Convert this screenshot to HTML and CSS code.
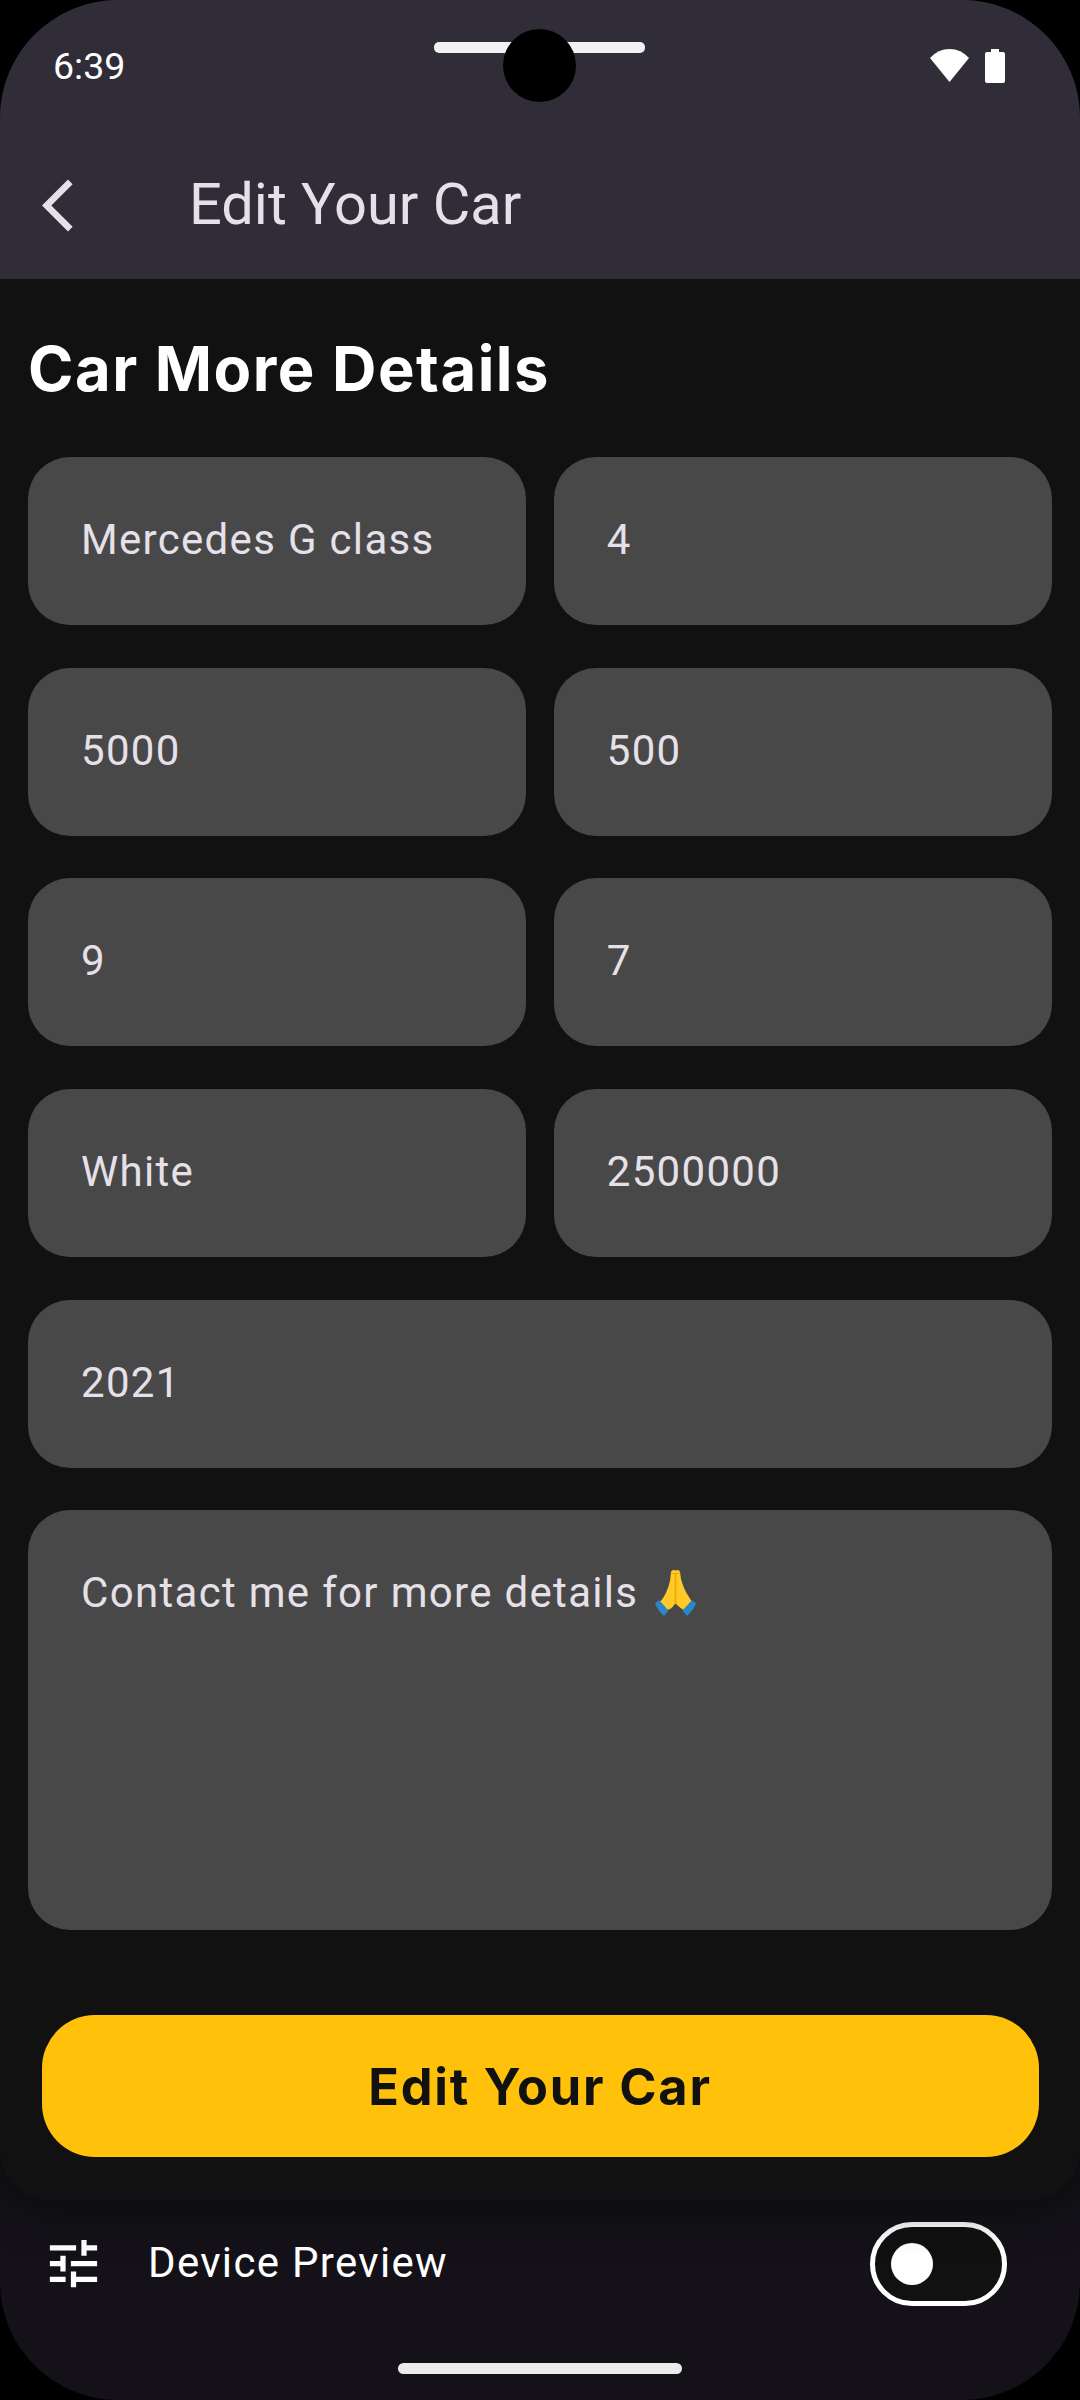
FILE: index.html
```html
<!DOCTYPE html>
<html lang="en">
<head>
<meta charset="utf-8">
<title>Edit Your Car</title>
<link rel="stylesheet" href="styles.css">
</head>
<body>
<div class="screen">
  <main class="app">
    <header class="header">
      <div class="status">
        <span class="clock">6:39</span>
        <div class="status-icons">
          <svg class="wifi" width="39" height="33" viewBox="0 0 39 33"><path d="M0 9Q8 0 19.500 0T39 9L19.500 33z" fill="#fff"/></svg>
          <svg class="battery" width="20" height="34" viewBox="0 0 20 34"><path d="M6 0h8v3h4q2 0 2 2v27q0 2-2 2H2q-2 0-2-2V5q0-2 2-2h4z" fill="#fff"/></svg>
        </div>
        <span class="speaker"></span>
        <span class="camera"></span>
      </div>
      <div class="toolbar">
        <svg width="63" height="63" viewBox="0 0 24 24"><path d="M11.67 3.87L9.9 2.1 0 12l9.9 9.9 1.77-1.77L3.54 12z" fill="#e6e0e9"/></svg>
        <h1 class="title">Edit Your Car</h1>
      </div>
    </header>
    <section class="content">
      <h2 class="heading">Car More Details</h2>
      <form class="form">
        <div class="field"><span>Mercedes G class</span></div>
        <div class="field"><span>4</span></div>
        <div class="field"><span>5000</span></div>
        <div class="field"><span>500</span></div>
        <div class="field"><span>9</span></div>
        <div class="field"><span>7</span></div>
        <div class="field"><span>White</span></div>
        <div class="field"><span>2500000</span></div>
        <div class="field wide"><span>2021</span></div>
        <div class="field wide tall"><span>Contact me for more details</span>
          <svg class="pray" width="42" height="48" viewBox="0 0 42 48">
            <path d="M16 3Q17 0 20.500 1.500Q24 0 25 3L26 10Q29 21 34 28L37 33L29 41Q25 39 22 36L20.700 34.500L19 36Q17 40 12 41L5 33Q12 25 15 12z" fill="#ffca28"/>
            <path d="M20.500 4V25Q20.500 31 20.700 35" fill="none" stroke="#f2a600" stroke-width="1.600"/>
            <path d="M16.500 4.500h8" stroke="#f2a600" stroke-width="1"/>
            <path d="M4 31L13.500 41.500L9 47Q3 42 0 34.500zM37 31L27.500 41.500L32 47Q38 42 41 34.500z" fill="#2a86c8"/>
          </svg>
        </div>
      </form>
      <button class="submit" type="button">Edit Your Car</button>
    </section>
  </main>
  <footer class="preview">
    <svg width="63" height="63" viewBox="0 0 24 24"><path d="M3 17v2h6v-2H3zM3 5v2h10V5H3zm10 16v-2h8v-2h-8v-2h-2v6h2zM7 9v2H3v2h4v2h2V9H7zm14 4v-2H11v2h10zm-6-4h2V7h4V5h-4V3h-2v6z" fill="#fff"/></svg>
    <span class="preview-label">Device Preview</span>
    <span class="switch"><span class="knob"></span></span>
  </footer>
  <div class="nav"><span class="handle"></span></div>
</div>
</body>
</html>
```
FILE: styles.css
```css
* { box-sizing: border-box; }
body { margin: 0; background: #000; font-family: Roboto, sans-serif; }
.screen {
  display: flex; flex-direction: column;
  width: 1080px; height: 2400px;
  border-radius: 118px; overflow: hidden;
  background: #141218;
}
.app {
  position: relative; z-index: 1;
  height: 2200.5px; flex: none;
  background: #111;
  border-radius: 0 0 52px 52px;
  box-shadow: 0 0 52px rgba(0, 0, 0, .6);
}
.header { height: 279px; background: #302d38; }
.status {
  position: relative; display: flex; justify-content: space-between;
  height: 132px; padding: 0 75px 0 53px; align-items: center;
}
.clock { font-size: 37.5px; color: #fff; }
.status-icons { display: flex; gap: 16px; align-items: flex-start; }
.speaker {
  position: absolute; left: 434px; top: 42px;
  width: 211px; height: 11px; border-radius: 5px; background: #eff1f2;
}
.camera {
  position: absolute; left: 503px; top: 29px;
  width: 73px; height: 73px; border-radius: 50%; background: #000;
}
.toolbar { display: flex; align-items: center; height: 147px; padding-left: 42px; gap: 84px; }
.title { margin: 0; padding-bottom: 3px; font-size: 57.75px; font-weight: 400; color: #e6e0e9; }
.content { padding: 0 28px; }
.heading {
  margin: 0; padding-top: 49px; height: 178px;
  font: 650 61.5px/82px Inter, sans-serif; letter-spacing: 1.5px; color: #fff;
}
.form { display: grid; grid-template-columns: 1fr 1fr; gap: 42.700px 27.500px; }
.field {
  display: flex; height: 168px; padding: 58px 0 0 53px;
  border-radius: 42px; background: #484848;
  font-size: 42px; line-height: 49px; letter-spacing: 1.313px; color: #e6e0e9;
}
.wide { grid-column: 1 / -1; }
.tall { height: 420px; }
.pray { margin: 1px 0 0 17px; }
.submit {
  display: block; width: 997px; height: 142px; margin: 85px auto 0; padding: 0;
  border: 0; border-radius: 53px; background: #ffc10a;
  font: 650 50.500px Inter, sans-serif; letter-spacing: 1.800px; color: #111;
}
.preview { display: flex; align-items: center; height: 126px; padding: 0 73.500px 0 42px; }
.preview-label { flex: 1; margin-left: 43px; padding-bottom: 2px; font-size: 42px; letter-spacing: 1.313px; color: #fff; }
.switch {
  display: flex; align-items: center;
  width: 136.500px; height: 84px; padding-left: 15.750px;
  border: 5.250px solid #fff; border-radius: 42px; background: #111;
}
.knob { width: 42px; height: 42px; border-radius: 50%; background: #fff; }
.nav { display: flex; justify-content: center; padding-top: 36.500px; }
.handle { width: 284px; height: 11px; border-radius: 5.500px; background: #ececec; }
```
